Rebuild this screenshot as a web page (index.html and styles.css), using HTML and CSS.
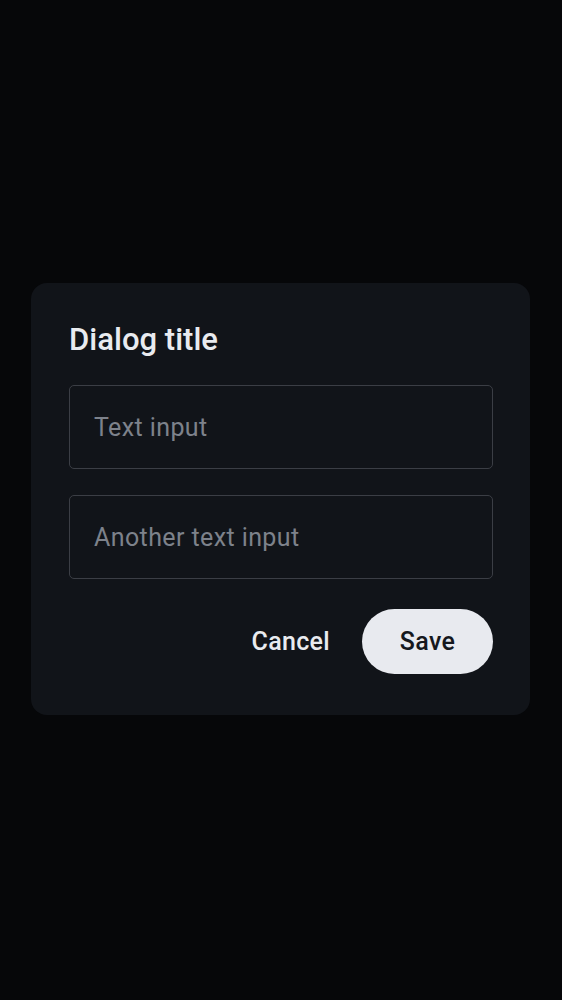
FILE: index.html
```html
<!DOCTYPE html>
<html>
<head>
<meta charset="utf-8">
<link rel="stylesheet" href="styles.css">
</head>
<body>
<div class="dialog">
  <h1 class="title">Dialog title</h1>
  <div class="field"><span class="placeholder">Text input</span></div>
  <div class="field"><span class="placeholder">Another text input</span></div>
  <div class="actions">
    <button class="btn btn-text">Cancel</button>
    <button class="btn btn-filled">Save</button>
  </div>
</div>
</body>
</html>
```
FILE: styles.css
```css
html, body {
  margin: 0;
  padding: 0;
  background: #060709;
  height: 100%;
}
body {
  font-family: Roboto, "Noto Sans", sans-serif;
}
.dialog {
  box-sizing: border-box;
  width: 499px;
  height: 432px;
  margin: 283px 0 0 31px;
  background: #111419;
  border-radius: 16px;
  padding: 39px 37px 42px 38px;
  display: flex;
  flex-direction: column;
}
.title {
  margin: 0 0 27px 0;
  font-family: "Roboto Medium", Roboto, sans-serif;
  font-size: 31px;
  line-height: 36px;
  font-weight: 500;
  color: #e9ebef;
}
.field {
  box-sizing: border-box;
  height: 84px;
  flex: none;
  border: 1px solid #3b3e45;
  border-radius: 5px;
  display: flex;
  align-items: center;
  padding: 0 24px;
  margin-bottom: 26px;
}
.placeholder {
  font-size: 25px;
  letter-spacing: 0.4px;
  color: #7d828b;
}
.actions {
  display: flex;
  justify-content: flex-end;
  align-items: center;
  gap: 32px;
  margin-top: 4px;
}
.btn {
  font-family: "Roboto Medium", Roboto, sans-serif;
  font-size: 25px;
  letter-spacing: 0.3px;
  font-weight: 500;
  border: none;
  cursor: pointer;
}
.btn-text {
  background: transparent;
  color: #e9ebef;
  padding: 0;
}
.btn-filled {
  background: #e8eaef;
  color: #15181d;
  height: 65px;
  width: 131px;
  border-radius: 33px;
}
```
